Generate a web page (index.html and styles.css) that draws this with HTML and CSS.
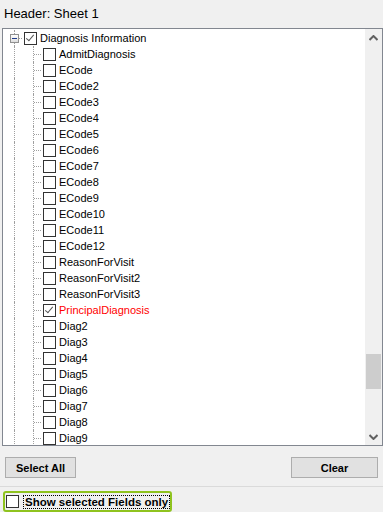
FILE: index.html
```html
<!DOCTYPE html>
<html lang="en">
<head>
    <meta charset="UTF-8">
    <title>Header: Sheet 1</title>
    <link rel="stylesheet" href="styles.css">
</head>
<body>
    <div class="panel">
        <div class="title">Header: Sheet 1</div>

        <div class="tree">
            <div class="tree-list">
                <div class="row root">
                    <span class="exp"><span class="minus"></span></span>
                    <span class="chk checked"></span>
                    <span class="label">Diagnosis Information</span>
                </div>
                <div class="row"><span class="guide"></span><span class="branch"></span><span class="chk"></span><span class="label">AdmitDiagnosis</span></div>
                <div class="row"><span class="guide"></span><span class="branch"></span><span class="chk"></span><span class="label">ECode</span></div>
                <div class="row"><span class="guide"></span><span class="branch"></span><span class="chk"></span><span class="label">ECode2</span></div>
                <div class="row"><span class="guide"></span><span class="branch"></span><span class="chk"></span><span class="label">ECode3</span></div>
                <div class="row"><span class="guide"></span><span class="branch"></span><span class="chk"></span><span class="label">ECode4</span></div>
                <div class="row"><span class="guide"></span><span class="branch"></span><span class="chk"></span><span class="label">ECode5</span></div>
                <div class="row"><span class="guide"></span><span class="branch"></span><span class="chk"></span><span class="label">ECode6</span></div>
                <div class="row"><span class="guide"></span><span class="branch"></span><span class="chk"></span><span class="label">ECode7</span></div>
                <div class="row"><span class="guide"></span><span class="branch"></span><span class="chk"></span><span class="label">ECode8</span></div>
                <div class="row"><span class="guide"></span><span class="branch"></span><span class="chk"></span><span class="label">ECode9</span></div>
                <div class="row"><span class="guide"></span><span class="branch"></span><span class="chk"></span><span class="label">ECode10</span></div>
                <div class="row"><span class="guide"></span><span class="branch"></span><span class="chk"></span><span class="label">ECode11</span></div>
                <div class="row"><span class="guide"></span><span class="branch"></span><span class="chk"></span><span class="label">ECode12</span></div>
                <div class="row"><span class="guide"></span><span class="branch"></span><span class="chk"></span><span class="label">ReasonForVisit</span></div>
                <div class="row"><span class="guide"></span><span class="branch"></span><span class="chk"></span><span class="label">ReasonForVisit2</span></div>
                <div class="row"><span class="guide"></span><span class="branch"></span><span class="chk"></span><span class="label">ReasonForVisit3</span></div>
                <div class="row"><span class="guide"></span><span class="branch"></span><span class="chk checked"></span><span class="label selected">PrincipalDiagnosis</span></div>
                <div class="row"><span class="guide"></span><span class="branch"></span><span class="chk"></span><span class="label">Diag2</span></div>
                <div class="row"><span class="guide"></span><span class="branch"></span><span class="chk"></span><span class="label">Diag3</span></div>
                <div class="row"><span class="guide"></span><span class="branch"></span><span class="chk"></span><span class="label">Diag4</span></div>
                <div class="row"><span class="guide"></span><span class="branch"></span><span class="chk"></span><span class="label">Diag5</span></div>
                <div class="row"><span class="guide"></span><span class="branch"></span><span class="chk"></span><span class="label">Diag6</span></div>
                <div class="row"><span class="guide"></span><span class="branch"></span><span class="chk"></span><span class="label">Diag7</span></div>
                <div class="row"><span class="guide"></span><span class="branch"></span><span class="chk"></span><span class="label">Diag8</span></div>
                <div class="row"><span class="guide"></span><span class="branch"></span><span class="chk"></span><span class="label">Diag9</span></div>
            </div>

            <div class="scrollbar">
                <span class="arrow">
                    <svg width="9" height="6" viewBox="0 0 9 6"><path d="M0.5 5 L4.5 1 L8.5 5" fill="none" stroke="#606060" stroke-width="2"/></svg>
                </span>
                <div class="track">
                    <div class="thumb"></div>
                </div>
                <span class="arrow">
                    <svg width="9" height="6" viewBox="0 0 9 6"><path d="M0.5 1 L4.5 5 L8.5 1" fill="none" stroke="#606060" stroke-width="2"/></svg>
                </span>
            </div>
        </div>

        <div class="buttons">
            <button type="button" class="btn select-all">Select All</button>
            <button type="button" class="btn clear">Clear</button>
        </div>

        <div class="footer">
            <label class="only-selected">
                <span class="chk"></span>
                <span class="focus-text">Show selected Fields only</span>
            </label>
        </div>
    </div>
</body>
</html>
```

FILE: styles.css
```css
/* Base */
body {
    margin: 0;
    background: #f0f0f0;
    font-family: 'Liberation Sans', Arial, sans-serif;
    font-size: 11px;
    color: #000;
}

.panel {
    width: 383px;
    height: 512px;
    overflow: hidden;
}

.title {
    font-size: 13px;
    padding: 6px 0 0 4px;
    height: 22px;
}

/* Tree box */
.tree {
    display: flex;
    margin-left: 2px;
    width: 379px;
    height: 416px;
    border: 1px solid #828790;
    background: #fff;
    overflow: hidden;
}

.tree-list {
    flex: 1;
    padding-top: 1px;
    overflow: hidden;
}

.row {
    display: flex;
    align-items: center;
    height: 16px;
    white-space: nowrap;
}

.exp, .guide, .branch {
    position: relative;
    width: 19px;
    height: 16px;
    flex: none;
}

/* dotted tree lines */
.exp::before, .guide::before, .branch::before {
    content: "";
    position: absolute;
    left: 11px;
    top: 0;
    bottom: 0;
    border-left: 1px dotted #a0a0a0;
}

.branch::after {
    content: "";
    position: absolute;
    left: 12px;
    right: 0;
    top: 8px;
    border-top: 1px dotted #a0a0a0;
}

.exp::after {
    content: "";
    position: absolute;
    left: 16px;
    right: 0;
    top: 8px;
    border-top: 1px dotted #a0a0a0;
}

.minus {
    position: absolute;
    left: 7px;
    top: 4px;
    width: 7px;
    height: 7px;
    border: 1px solid #919191;
    background: linear-gradient(#fff, #dedede);
    z-index: 1;
}

.minus::before {
    content: "";
    position: absolute;
    left: 1px;
    right: 1px;
    top: 3px;
    border-top: 1px solid #1f3b8c;
}

.chk {
    position: relative;
    width: 11px;
    height: 11px;
    border: 1px solid #333;
    background: #fff;
    margin-left: 2px;
    flex: none;
}

.chk.checked::after {
    content: "";
    position: absolute;
    left: 3px;
    top: 0px;
    width: 3px;
    height: 7px;
    border: solid #555;
    border-width: 0 1.5px 1.5px 0;
    transform: rotate(40deg);
}

.label {
    margin-left: 3px;
}

.label.selected {
    color: #ff0000;
}

/* Scrollbar */
.scrollbar {
    width: 17px;
    background: #f0f0f0;
    display: flex;
    flex-direction: column;
    flex: none;
}

.arrow {
    height: 17px;
    display: flex;
    align-items: center;
    justify-content: center;
}

.track {
    flex: 1;
    padding: 0 1px;
}

.thumb {
    margin-top: 308px;
    height: 35px;
    background: #cdcdcd;
}

/* Buttons */
.buttons {
    display: flex;
    justify-content: space-between;
    padding: 11px 5px 0 5px;
    height: 29px;
    border-bottom: 1px solid #dadada;
}

.btn {
    height: 21px;
    border: 1px solid #adadad;
    background: #e1e1e1;
    font-family: 'Liberation Sans', Arial, sans-serif;
    font-size: 11px;
    font-weight: bold;
    padding: 0;
}

.select-all {
    width: 71px;
}

.clear {
    width: 87px;
}

/* Footer checkbox */
.footer {
    padding: 4px 0 0 3px;
}

.only-selected {
    display: inline-flex;
    align-items: center;
    height: 17px;
    padding: 0 1px;
    border: 2px solid #8fc31f;
    border-radius: 3px;
    font-weight: bold;
    font-size: 11.5px;
}

.only-selected .chk {
    margin-left: 0;
}

.focus-text {
    margin-left: 5px;
    padding: 0 1px;
    outline: 1px dotted #000;
    outline-offset: 0;
}
```
